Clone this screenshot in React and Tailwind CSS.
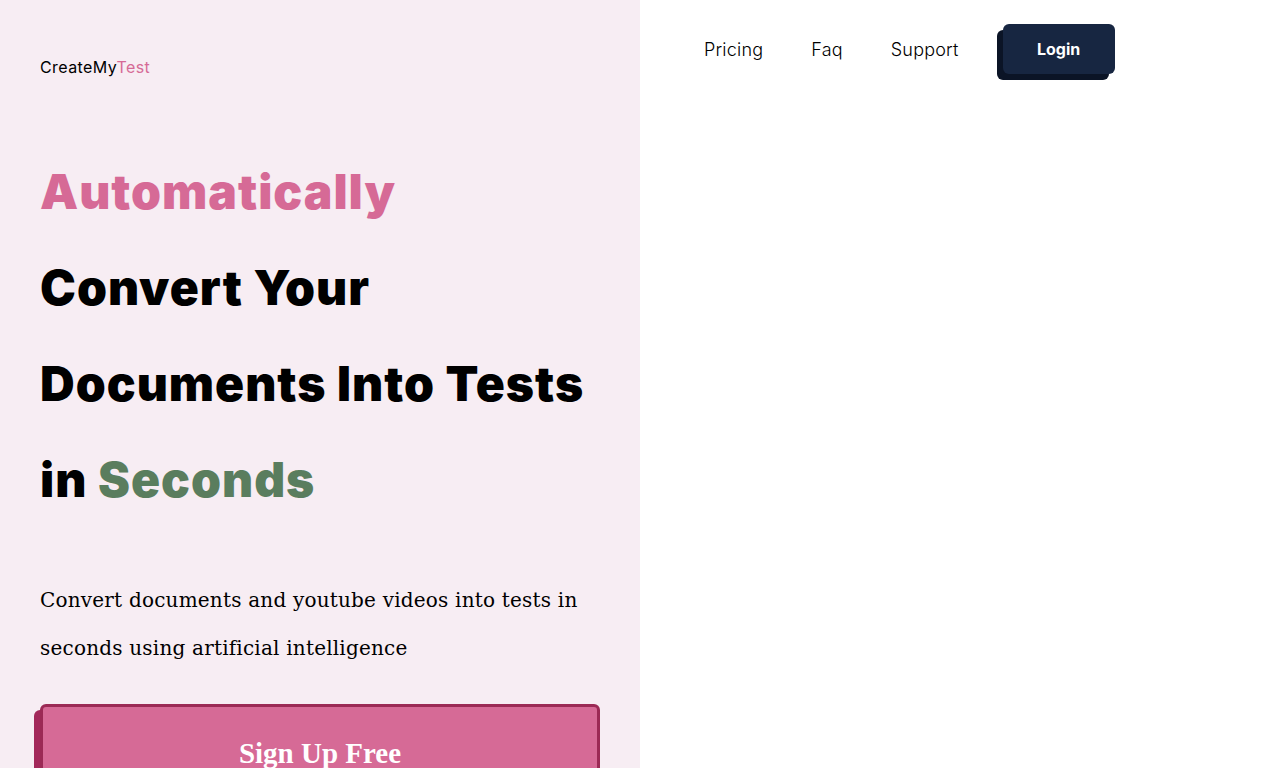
import React from 'react';

const sans = { fontFamily: 'Inter, "Noto Sans", sans-serif' };

const Nav = () => (
  <nav className="flex items-center h-[98px] pl-16" style={sans}>
    <div className="flex items-center gap-12 text-[18px] font-light tracking-[0.2px] text-black">
      <a href="#">Pricing</a>
      <a href="#">Faq</a>
      <a href="#">Support</a>
    </div>
    <button className="ml-[44px] w-[112px] h-[50px] rounded-md bg-[#172641] text-white text-[16px] font-bold shadow-[-6px_6px_0_0_#0b1426]">
      Login
    </button>
  </nav>
);

const Hero = () => (
  <section className="w-[640px] min-h-screen bg-[#f7edf3] px-10 shrink-0">
    <div className="pt-[55px] h-[144px] text-[16px] tracking-[0.4px] text-black" style={sans}>
      CreateMy<span className="text-[#d66a96]">Test</span>
    </div>
    <h1
      className="text-[48px] leading-[96px] font-black tracking-[1px] text-black"
      style={sans}
    >
      <span className="block text-[#d66a96]">Automatically</span>
      <span className="block">Convert Your</span>
      <span className="block">Documents Into Tests</span>
      <span className="block">
        in <span className="text-[#5a7d5e]">Seconds</span>
      </span>
    </h1>
    <p
      className="mt-12 text-[20px] leading-[48px] tracking-[0.2px] text-black"
      style={{ fontFamily: '"DejaVu Serif", "Liberation Serif", serif' }}
    >
      Convert documents and youtube videos into tests in seconds using artificial intelligence
    </p>
    <button
      className="mt-8 w-[560px] h-[96px] pt-1 rounded-md border-[3px] border-[#9b2a55] bg-[#d66a96] text-white text-[29px] font-bold shadow-[-6px_6px_0_0_#a3285a]"
      style={{ fontFamily: '"Liberation Serif", "DejaVu Serif", serif' }}
    >
      Sign Up Free
    </button>
  </section>
);

export default function App() {
  return (
    <div className="flex w-full min-h-screen overflow-hidden bg-white">
      <Hero />
      <div className="flex-1">
        <Nav />
      </div>
    </div>
  );
}
